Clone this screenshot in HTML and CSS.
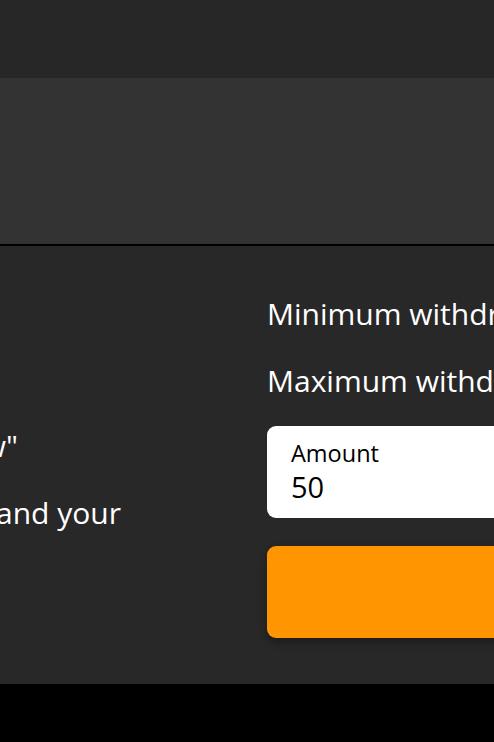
FILE: index.html
```html
<!DOCTYPE html>
<html lang="en">

<head>
    <meta charset="UTF-8">
    <meta name="viewport" content="width=device-width, initial-scale=1.0">
    <title>Withdraw</title>
    <link rel="stylesheet" href="styles.css">
</head>

<body>
    <header class="topbar"></header>
    <div class="banner"></div>

    <main class="content">
        <div class="guide">
            <div class="guide-line first">2. Tap "Withdraw"</div>
            <div class="guide-line second">3. Enter the amount and your</div>
        </div>

        <div class="withdraw">
            <div class="limits">
                <p>Minimum withdrawal: 50</p>
                <p>Maximum withdrawal: 5000</p>
            </div>
            <label class="amountField">
                <span class="amountLabel">Amount</span>
                <input class="amountInput" type="text" value="50">
            </label>
            <button class="withdrawButton"></button>
        </div>
    </main>
</body>

</html>
```

FILE: styles.css
```css
html, body {
    margin: 0;
    height: 100%;
}

body {
    font-family: "Open Sans", "Noto Sans", sans-serif;
    background-color: #000;
    color: #fff;
}

.topbar {
    height: 78px;
    background-color: #272727;
}

.banner {
    height: 166px;
    background-color: #333333;
    border-bottom: 2px solid #000;
}

.content {
    display: flex;
    height: 438px;
    background-color: #282828;
    overflow: hidden;
}

.guide {
    flex: 0 0 230px;
    min-width: 0;
    padding-top: 182px;
    font-size: 30px;
    line-height: 36px;
}

.guide-line {
    display: flex;
    justify-content: flex-end;
    white-space: nowrap;
}

.guide-line + .guide-line {
    margin-top: 31px;
}

.guide-line.first {
    padding-right: 212px;
}

.guide-line.second {
    padding-right: 109px;
}

.withdraw {
    flex: 0 0 420px;
    margin-left: 37px;
    padding-top: 50px;
}

.limits {
    font-size: 30px;
    line-height: 36px;
    white-space: nowrap;
    margin-bottom: 27px;
}

.limits p {
    margin: 0;
}

.limits p + p {
    margin-top: 31px;
}

.amountField {
    display: flex;
    flex-direction: column;
    height: 92px;
    box-sizing: border-box;
    padding: 13px 24px;
    background-color: #fff;
    border-radius: 9px;
    color: #000;
}

.amountLabel {
    font-size: 23.5px;
    line-height: 28px;
}

.amountInput {
    margin-top: 2px;
    padding: 0;
    border: none;
    outline: none;
    background: transparent;
    font-family: inherit;
    font-size: 29px;
    line-height: 36px;
    height: 36px;
    color: #000;
}

.withdrawButton {
    display: block;
    width: 100%;
    height: 92px;
    margin-top: 28px;
    border: none;
    border-radius: 9px;
    background-color: #ff9500;
    box-shadow: 0 4px 8px rgba(0, 0, 0, 0.35);
}
```
